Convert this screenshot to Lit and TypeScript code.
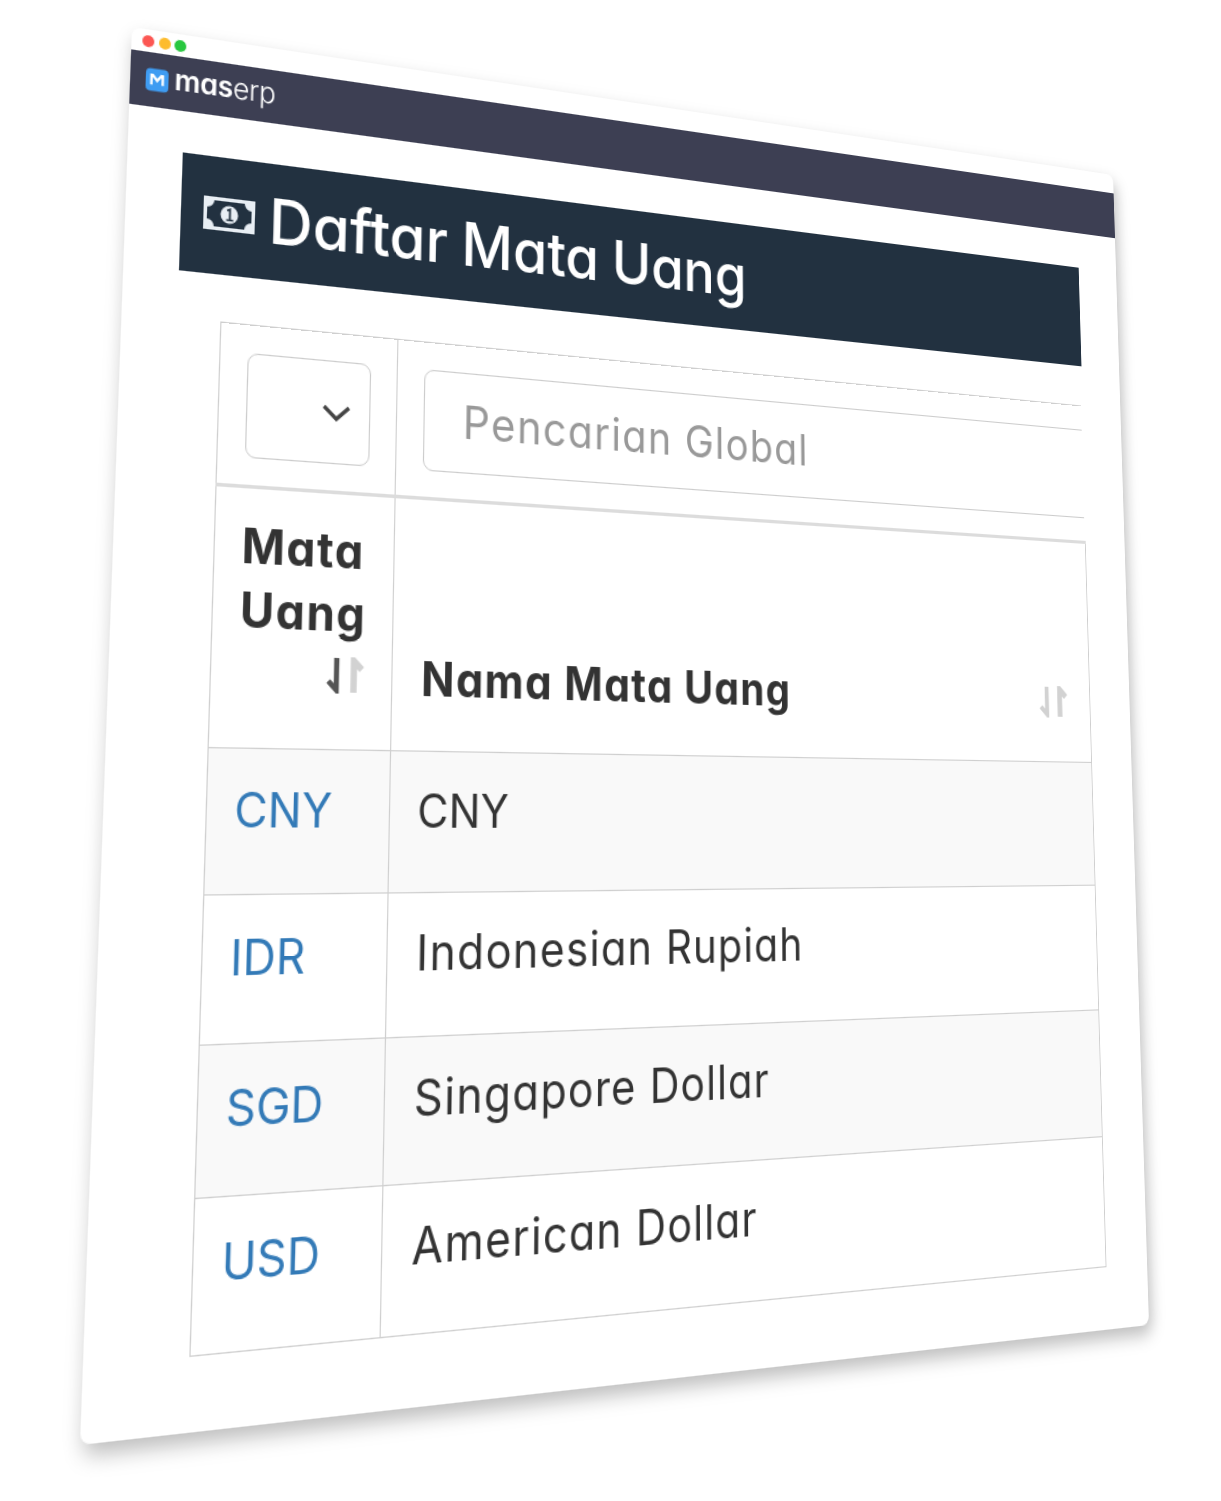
import { LitElement, html, css, svg } from "lit";
import { customElement } from "lit/decorators.js";

const W = 1000;
const H = 1100;

/** Maps the flat W×H window on to the four corners it has in the picture. */
function perspective(q: number[][]): string {
  const [[x0, y0], [x1, y1], [x2, y2], [x3, y3]] = q;
  const dx1 = x1 - x2, dx2 = x3 - x2, sx = x0 - x1 + x2 - x3;
  const dy1 = y1 - y2, dy2 = y3 - y2, sy = y0 - y1 + y2 - y3;
  const det = dx1 * dy2 - dx2 * dy1;
  const g = (sx * dy2 - dx2 * sy) / det;
  const h = (dx1 * sy - sx * dy1) / det;
  const a = x1 - x0 + g * x1, b = x3 - x0 + h * x3;
  const d = y1 - y0 + g * y1, e = y3 - y0 + h * y3;
  return `matrix3d(${[a / W, d / W, 0, g / W, b / H, e / H, 0, h / H, 0, 0, 1, 0, x0, y0, 0, 1].join(",")})`;
}

const ROWS = [
  ["CNY", "CNY"],
  ["IDR", "Indonesian Rupiah"],
  ["SGD", "Singapore Dollar"],
  ["USD", "American Dollar"],
];

const sortIcon = (active: boolean) => html`<svg class="sort ${active ? "active" : ""}" viewBox="0 0 38 30" aria-hidden="true">
  ${svg`<path class="down" d="M12 1v26L5 20" fill="none" stroke-width="4.500"/>
  <path class="up" d="M27 29V3l7 7" fill="none" stroke-width="5.500"/>`}
</svg>`;

@customElement("app-root")
export class AppRoot extends LitElement {
  static styles = css`
    :host { display: block; width: 1221px; height: 1501px; overflow: hidden; background: #fff;
      font-family: Inter, "Liberation Sans", sans-serif; font-feature-settings: "cv11"; }
    .window { width: 1000px; height: 1100px; box-sizing: border-box; background: #fff; border-radius: 8px;
      transform-origin: 0 0; box-shadow: 3px 8px 16px rgba(0,0,0,.26); }
    .inner { filter: blur(.55px); height: 100%; }
    .dots { height: 18.5px; display: flex; gap: 3.5px; padding-left: 9px; box-sizing: border-box; align-items: center; padding-top: 1px; }
    .dot { width: 10px; height: 10px; border-radius: 50%; }
    .red { background: #fc5753; } .amber { background: #fdbc2e; } .green { background: #28c73f; }
    .bar { height: 46px; background: #3d3f53; display: flex; align-items: center; padding-left: 13px; gap: 5px; box-sizing: border-box; }
    .mark { width: 19px; height: 20px; }
    .brand { color: #fff; font-size: 24.500px; letter-spacing: -.3px; line-height: 1; padding-bottom: 4px; }
    .brand b { font-weight: 600; } .brand span { font-weight: 300; }
    .content { padding: 35.5px 46px 0; }
    .title { height: 99px; background: #223140; color: #fff; display: flex; align-items: center; gap: 12px; padding: 0 0 3px 19px; box-sizing: border-box;
      font-size: 53.300px; font-weight: 450; word-spacing: -1.500px; white-space: nowrap; }
    .money { width: 44px; height: 28px; flex: none; }
    .table-wrap { margin: 38.5px 0 0 36px; width: 870.5px; }
    table { border-collapse: collapse; table-layout: fixed; width: 870.5px; color: #333; font-size: 38px; line-height: 50px; }
    col.c1 { width: 155px; }
    td, th { border: 1px solid #cfcfcf; padding: 0; text-align: left; vertical-align: top; box-sizing: border-box; }
    .filter td { height: 134.3px; border-bottom: 3px solid #dcdcdc; overflow: hidden; }
    .filter td:last-child { border-right: none; }
    .box { box-sizing: border-box; border: 1.4px solid #ccc; border-radius: 9px; background: #fff; height: 87.5px; }
    .select { width: 108px; margin: 23px 0 0 23px; display: flex; align-items: center; justify-content: flex-end; padding-right: 15px; }
    .chev { width: 28px; height: 17px; margin-top: 3px; }
    .search { width: 760px; height: 87px; margin: 23px 0 0 24px; display: flex; align-items: center; padding-left: 35px;
      color: #999; font-size: 39.500px; font-weight: 400; letter-spacing: 1.300px; white-space: nowrap; }
    th { height: 211.5px; vertical-align: bottom; font-weight: 700; padding: 0 16px 33px 22.5px; color: #333; font-size: 39.500px; line-height: 52px; letter-spacing: 1.300px; }
    .h1 { padding-right: 22px; padding-bottom: 45px; }
    .h2 { padding-left: 25.5px; padding-right: 24px; }
    .hrow { display: flex; align-items: center; justify-content: space-between; }
    .hcol { display: flex; flex-direction: column; }
    .sort { width: 38px; height: 30px; flex: none; stroke: #d2d2d2; }
    .sort.active .down { stroke: #555; }
    .hcol .sort { align-self: flex-end; margin-top: 9px; }
    .h2 .sort { margin-top: 6px; }
    tbody td { height: 115px; padding: 22.5px 10px 0 22.5px; }
    tbody tr:last-child td { height: 116px; }
    tbody td:last-child { padding-left: 25px; font-size: 39.500px; letter-spacing: 1.200px; }
    tbody td.same:last-child { padding-left: 24px; font-size: 38px; letter-spacing: .2px; }
    tbody tr:nth-child(odd) td { background: #f9f9f9; }
    a { color: #337ab7; text-decoration: none; }
  `;

  render() {
    const matrix = perspective([[132, 27], [1113, 175], [1149, 1325], [80, 1445]]);
    return html`<div class="window" style="transform:${matrix}">
      <div class="inner">
        <div class="dots"><i class="dot red"></i><i class="dot amber"></i><i class="dot green"></i></div>
        <div class="bar">
          <svg class="mark" viewBox="0 0 20 20" aria-hidden="true">
            <rect width="20" height="20" rx="4" fill="#3f9cf2"/>
            <path d="M5 14.5V5.8h1.2L10 10.5l3.8-4.7H15v8.700" fill="none" stroke="#fff" stroke-width="2.200"/>
          </svg>
          <div class="brand"><b>mas</b><span>erp</span></div>
        </div>
        <div class="content">
          <div class="title">
            <svg class="money" viewBox="0 0 44 28" aria-hidden="true">
              <rect x="1.500" y="1.500" width="41" height="25" fill="#223140" stroke="#e8eef4" stroke-width="3"/>
              <path d="M3 3h6a6 6 0 0 1-6 6zM41 3h-6a6 6 0 0 0 6 6zM3 25h6a6 6 0 0 0-6-6zM41 25h-6a6 6 0 0 1 6-6z" fill="#e8eef4"/>
              <circle cx="22" cy="14" r="7.500" fill="#e8eef4"/>
              <path d="M20 10.500l2.500-1.200v9M19.500 18.500h6" fill="none" stroke="#223140" stroke-width="1.700"/>
            </svg>
            Daftar Mata Uang
          </div>
          <div class="table-wrap">
            <table>
              <colgroup><col class="c1"/><col/></colgroup>
              <thead>
                <tr class="filter">
                  <td>
                    <div class="box select">
                      <svg class="chev" viewBox="0 0 28 17" aria-hidden="true"><path d="M3 3l11 10 11-10" fill="none" stroke="#444" stroke-width="3.200"/></svg>
                    </div>
                  </td>
                  <td><div class="box search">Pencarian Global</div></td>
                </tr>
                <tr>
                  <th class="h1"><div class="hcol">Mata Uang ${sortIcon(true)}</div></th>
                  <th class="h2"><div class="hrow">Nama Mata Uang ${sortIcon(false)}</div></th>
                </tr>
              </thead>
              <tbody>
                ${ROWS.map(([code, name]) => html`<tr><td><a href="#">${code}</a></td><td class=${code === name ? "same" : ""}>${name}</td></tr>`)}
              </tbody>
            </table>
          </div>
        </div>
      </div>
    </div>`;
  }
}
